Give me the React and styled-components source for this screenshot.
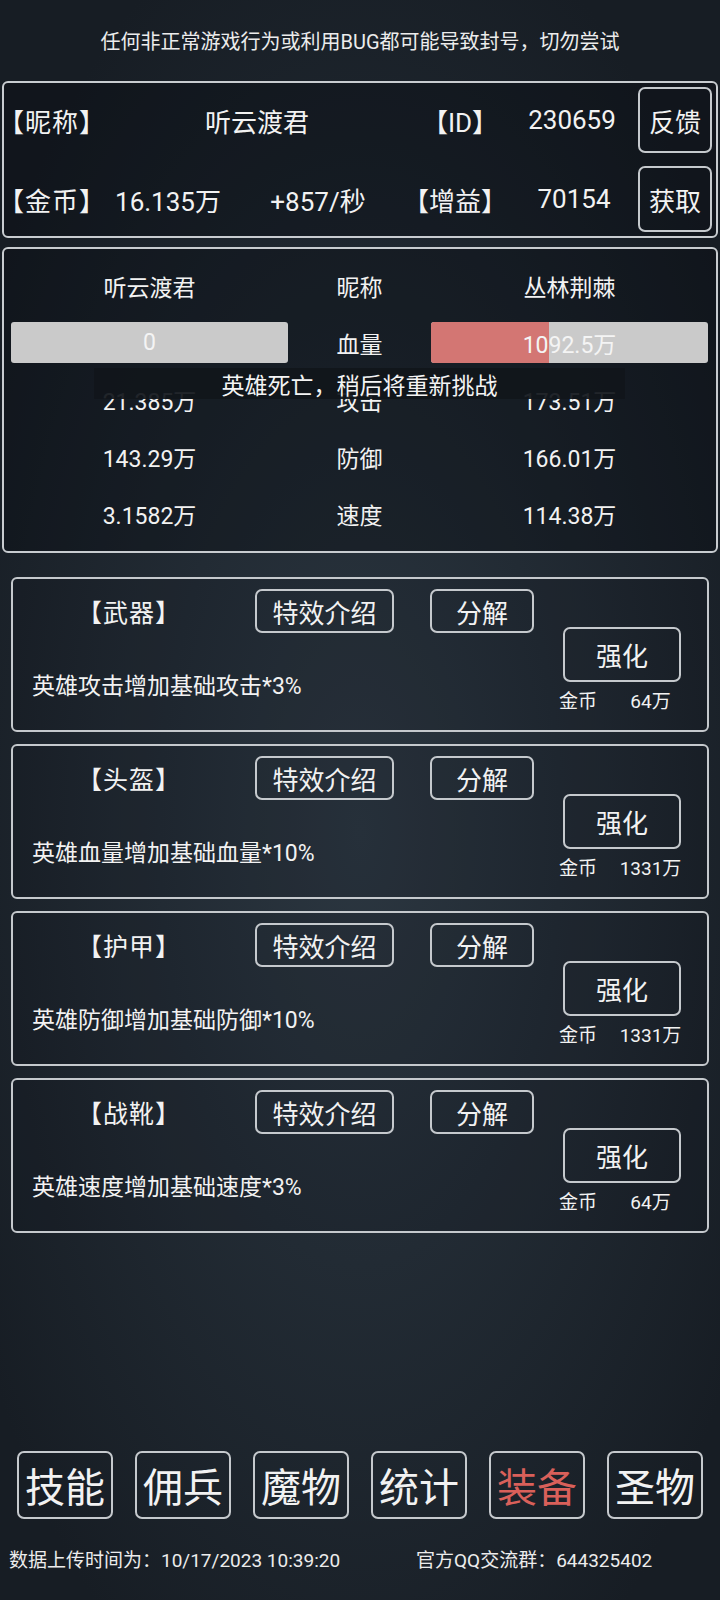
import React from "react";
import styled, { createGlobalStyle } from "styled-components";

const GlobalStyle = createGlobalStyle`
  body {
    margin: 0;
    background: #161c23;
  }
  * {
    box-sizing: border-box;
  }
`;

const Page = styled.div`
  width: 720px;
  min-height: 1600px;
  display: flex;
  flex-direction: column;
  font-family: Roboto, "Noto Sans CJK SC", sans-serif;
  color: #f2f2f2;
  background: radial-gradient(
    ellipse 62% 60% at 50% 52%,
    #2b3640 0%,
    #222b34 45%,
    #171d24 100%
  );
`;

const Notice = styled.div`
  height: 81px;
  display: flex;
  align-items: center;
  justify-content: center;
  font-size: 20px;
  color: #ececec;
`;

const Panel = styled.div`
  margin: 0 2px;
  border: 2px solid #c8ccd0;
  border-radius: 6px;
  background: rgba(6, 10, 14, 0.35);
`;

const InfoPanel = styled(Panel)`
  height: 157px;
  padding: 4px 4px 4px 0;
  display: grid;
  grid-template-rows: 66px 66px;
  row-gap: 13px;
`;

const InfoRow = styled.div`
  display: grid;
  grid-template-columns: ${(p) => p.$cols};
  align-items: center;
  font-size: 26px;
`;

const Cell = styled.div`
  text-align: ${(p) => p.$align || "center"};
  white-space: nowrap;
`;

const Label = styled(Cell)`
  margin-left: -6px;
  letter-spacing: 1px;
`;

const BoxButton = styled.div`
  width: ${(p) => p.$w}px;
  height: ${(p) => p.$h}px;
  border: 2px solid #c5c9cd;
  border-radius: 7px;
  display: flex;
  align-items: center;
  justify-content: center;
  font-size: ${(p) => p.$size || 26}px;
  color: ${(p) => (p.$active ? "#d9605a" : "#f2f2f2")};
`;

const BattlePanel = styled(Panel)`
  position: relative;
  margin-top: 9px;
  padding: 8px 8px 9px 7px;
  display: grid;
  grid-template-columns: 277px 1fr 277px;
  grid-auto-rows: 57px;
  align-items: center;
  font-size: 23px;
`;

const HpBar = styled.div`
  position: relative;
  height: 41px;
  background: #cacaca;
  border-radius: 3px;
  overflow: hidden;
  display: flex;
  align-items: center;
  justify-content: center;
  color: #f4f4f4;
  font-size: 23px;
`;

const HpFill = styled.div`
  position: absolute;
  left: 0;
  top: 0;
  bottom: 0;
  background: #d37673;
`;

const HpText = styled.span`
  position: relative;
`;

const Toast = styled.div`
  position: absolute;
  left: 90px;
  top: 119px;
  width: 531px;
  height: 31px;
  background: rgba(17, 21, 27, 0.93);
  display: flex;
  align-items: center;
  justify-content: center;
  font-size: 23px;
  color: #f4f4f4;
`;

const CardList = styled.div`
  margin: 24px 11px 0;
  display: flex;
  flex-direction: column;
  gap: 12px;
`;

const Card = styled.div`
  height: 155px;
  border: 2px solid #c5c9cd;
  border-radius: 6px;
  background: rgba(6, 10, 14, 0.12);
  display: flex;
`;

const CardMain = styled.div`
  flex: 1;
  padding-top: 10px;
`;

const CardTop = styled.div`
  display: flex;
  align-items: center;
  height: 44px;
`;

const SlotName = styled.div`
  width: 96px;
  margin-left: 64px;
  margin-right: 82px;
  text-align: center;
  font-size: 25px;
  letter-spacing: 1px;
`;

const Gap = styled.div`
  width: ${(p) => p.$w}px;
`;

const Desc = styled.div`
  margin-top: 39px;
  padding-left: 19px;
  font-size: 23px;
  line-height: 30px;
`;

const CardSide = styled.div`
  width: 158px;
  padding-top: 48px;
`;

const SideButton = styled(BoxButton)`
  margin-left: 14px;
`;

const CostRow = styled.div`
  margin-top: 9px;
  display: grid;
  grid-template-columns: 58px 87px;
  font-size: 19px;
  line-height: 22px;
  text-align: center;
`;

const Nav = styled.div`
  margin-top: auto;
  padding: 0 17px;
  display: flex;
  gap: 22px;
`;

const Footer = styled.div`
  margin-top: 30px;
  padding: 0 0 27px 9px;
  display: flex;
  font-size: 19px;
  line-height: 24px;
  color: #ececec;
`;

const FooterItem = styled.div`
  width: ${(p) => (p.$w ? `${p.$w}px` : "auto")};
  white-space: nowrap;
`;

const stats = [
  ["听云渡君", "昵称", "丛林荆棘"],
  null,
  ["21.385万", "攻击", "173.51万"],
  ["143.29万", "防御", "166.01万"],
  ["3.1582万", "速度", "114.38万"],
];

const gear = [
  { name: "【武器】", desc: "英雄攻击增加基础攻击*3%", cost: "64万" },
  { name: "【头盔】", desc: "英雄血量增加基础血量*10%", cost: "1331万" },
  { name: "【护甲】", desc: "英雄防御增加基础防御*10%", cost: "1331万" },
  { name: "【战靴】", desc: "英雄速度增加基础速度*3%", cost: "64万" },
];

const tabs = ["技能", "佣兵", "魔物", "统计", "装备", "圣物"];

export default function App() {
  return (
    <Page>
      <GlobalStyle />
      <Notice>任何非正常游戏行为或利用BUG都可能导致封号，切勿尝试</Notice>

      <InfoPanel>
        <InfoRow $cols="96px 314px 92px 132px 74px">
          <Label $align="left">【昵称】</Label>
          <Cell>听云渡君</Cell>
          <Cell>【ID】</Cell>
          <Cell>230659</Cell>
          <BoxButton $w={74} $h={66}>反馈</BoxButton>
        </InfoRow>
        <InfoRow $cols="96px 136px 164px 110px 128px 74px">
          <Label $align="left">【金币】</Label>
          <Cell>16.135万</Cell>
          <Cell>+857/秒</Cell>
          <Cell>【增益】</Cell>
          <Cell>70154</Cell>
          <BoxButton $w={74} $h={66}>获取</BoxButton>
        </InfoRow>
      </InfoPanel>

      <BattlePanel>
        {stats.map((row, i) =>
          row ? (
            row.map((v, j) => <Cell key={`${i}-${j}`}>{v}</Cell>)
          ) : (
            <React.Fragment key={i}>
              <HpBar>
                <HpFill style={{ width: "0%" }} />
                <HpText>0</HpText>
              </HpBar>
              <Cell>血量</Cell>
              <HpBar>
                <HpFill style={{ width: "42.6%" }} />
                <HpText>1092.5万</HpText>
              </HpBar>
            </React.Fragment>
          )
        )}
        <Toast>英雄死亡，稍后将重新挑战</Toast>
      </BattlePanel>

      <CardList>
        {gear.map((g) => (
          <Card key={g.name}>
            <CardMain>
              <CardTop>
                <SlotName>{g.name}</SlotName>
                <BoxButton $w={139} $h={44}>特效介绍</BoxButton>
                <Gap $w={36} />
                <BoxButton $w={104} $h={44}>分解</BoxButton>
              </CardTop>
              <Desc>{g.desc}</Desc>
            </CardMain>
            <CardSide>
              <SideButton $w={118} $h={55}>强化</SideButton>
              <CostRow>
                <span>金币</span>
                <span>{g.cost}</span>
              </CostRow>
            </CardSide>
          </Card>
        ))}
      </CardList>

      <Nav>
        {tabs.map((t) => (
          <BoxButton key={t} $w={96} $h={68} $size={40} $active={t === "装备"}>
            {t}
          </BoxButton>
        ))}
      </Nav>

      <Footer>
        <FooterItem $w={407}>数据上传时间为：10/17/2023 10:39:20</FooterItem>
        <FooterItem>官方QQ交流群：644325402</FooterItem>
      </Footer>
    </Page>
  );
}
